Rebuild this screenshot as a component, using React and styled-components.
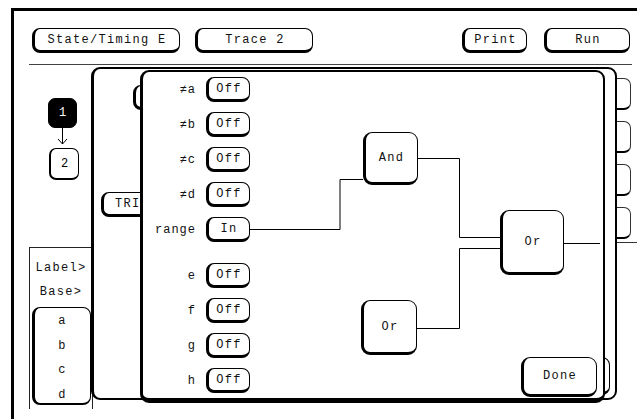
import React from "react";
import styled, { createGlobalStyle } from "styled-components";

const GlobalStyle = createGlobalStyle`
  html, body { margin: 0; padding: 0; background: #fff; }
  * { box-sizing: border-box; }
`;

const Screen = styled.div`
  width: 637px;
  height: 419px;
  overflow: hidden;
  background: #fff;
  padding: 8px 0 0 11px;
  font-family: "Liberation Mono", "DejaVu Sans Mono", monospace;
  font-size: 12px;
  letter-spacing: 1.3px;
  color: #111;
`;

const Frame = styled.div`
  border-left: 3px solid #000;
  border-top: 3px solid #000;
  height: 100%;
  display: flex;
  flex-direction: column;
`;

const Header = styled.div`
  display: flex;
  align-items: center;
  padding: 17px 7px 0 18px;
  gap: 15px;
`;

const Spacer = styled.div`
  flex: 1;
`;

const Key = styled.div`
  width: ${(p) => p.$w}px;
  height: ${(p) => p.$h || 25}px;
  margin-left: ${(p) => p.$ml || 0}px;
  margin-top: ${(p) => p.$mt || "0"};
  border: 1px solid #000;
  border-left-width: 3px;
  border-bottom-width: 3px;
  border-radius: 8px;
  display: flex;
  align-items: center;
  justify-content: center;
  background: #fff;
  white-space: nowrap;
  flex-shrink: 0;
  align-self: ${(p) => p.$self || "auto"};
`;

const Rule = styled.div`
  height: 1px;
  background: #444;
  margin: 11px 5px 0 15px;
`;

const Body = styled.div`
  flex: 1;
  display: flex;
`;

const LeftColumn = styled.div`
  width: 77px;
  flex-shrink: 0;
  display: flex;
  flex-direction: column;
  align-items: flex-start;
  padding: 33px 0 0 34px;
`;

const StepBox = styled.div`
  width: ${(p) => (p.$active ? 29 : 30)}px;
  height: ${(p) => (p.$active ? 30 : 32)}px;
  margin-left: ${(p) => (p.$active ? 0 : 1)}px;
  border-radius: 7px;
  display: flex;
  align-items: center;
  justify-content: center;
  letter-spacing: 0;
  background: ${(p) => (p.$active ? "#000" : "#fff")};
  color: ${(p) => (p.$active ? "#fff" : "#000")};
  border: 1px solid #000;
  border-left-width: ${(p) => (p.$active ? 1 : 2)}px;
  border-bottom-width: ${(p) => (p.$active ? 1 : 2)}px;
`;

const LabelPanel = styled.div`
  margin: 67px 0 0 -19px;
  width: 64px;
  height: 162px;
  border: 1px solid #222;
  border-bottom: none;
  padding: 8px 0 0 2px;
  display: flex;
  flex-direction: column;
  align-items: stretch;
`;

const PanelLine = styled.div`
  height: 24px;
  line-height: 24px;
  text-align: center;
  padding-right: 2px;
`;

const FieldBox = styled.div`
  margin-top: 3px;
  width: 59px;
  height: 98px;
  border: 1px solid #000;
  border-left-width: 3px;
  border-bottom-width: 2px;
  border-radius: 8px;
  padding-top: 1px;
`;

const FieldLine = styled.div`
  height: 24.5px;
  line-height: 24.5px;
  text-align: center;
`;

const Workspace = styled.div`
  position: relative;
  flex: 1;
  display: flex;
  align-items: flex-start;
`;

const BackPanel = styled.div`
  margin-top: 2px;
  width: 526px;
  height: 333px;
  flex-shrink: 0;
  border: 2px solid #000;
  border-left-width: 3px;
  border-radius: 9px;
  display: flex;
  flex-direction: column;
  align-items: flex-start;
  padding: 16px 5px 3px 7px;
`;

const Tabs = styled.div`
  display: flex;
  flex-direction: column;
  padding-top: 13px;
  gap: 11px;
  flex: 1;
`;

const Tab = styled.div`
  width: 14px;
  height: 32px;
  border: 1px solid #333;
  border-left: none;
  border-bottom: 2px solid #000;
  border-radius: 0 7px 7px 0;
`;

const TabWire = styled.div`
  height: 1px;
  background: #333;
  margin-top: -8px;
`;

const Dialog = styled.div`
  position: absolute;
  left: 49px;
  top: 5px;
  width: 465px;
  height: 333px;
  background: #fff;
  border: 2px solid #000;
  border-left-width: 3px;
  border-bottom-width: 5px;
  border-radius: 9px;
  padding: 5px 0 0 0;
`;

const Rows = styled.div`
  display: flex;
  flex-direction: column;
  gap: 10px;
  position: relative;
  z-index: 1;
`;

const Row = styled.div`
  display: flex;
  align-items: center;
  gap: 10px;
  margin-top: ${(p) => p.$extra || 0}px;
`;

const RowLabel = styled.div`
  width: 53px;
  text-align: right;
  letter-spacing: 1px;
`;

const Wires = styled.svg`
  position: absolute;
  left: 0;
  top: 0;
  width: 460px;
  height: 330px;
  pointer-events: none;
`;

const Node = styled.div`
  position: absolute;
  left: ${(p) => p.$x}px;
  top: ${(p) => p.$y}px;
  width: ${(p) => p.$w}px;
  height: ${(p) => p.$h}px;
  border: 1px solid #000;
  border-left-width: 3px;
  border-bottom-width: 3px;
  border-radius: 9px;
  background: #fff;
  display: flex;
  align-items: center;
  justify-content: center;
  z-index: 1;
`;

const stepArrow = (
  <svg width="30" height="20" viewBox="0 0 30 20" style={{ display: "block" }}>
    <line x1="14.5" y1="0" x2="14.5" y2="16" stroke="#000" strokeWidth="1" />
    <polyline points="10,11 14.5,16 19,11" fill="none" stroke="#000" strokeWidth="1" />
  </svg>
);

const topRows = [
  ["≠a", "Off"],
  ["≠b", "Off"],
  ["≠c", "Off"],
  ["≠d", "Off"],
  ["range", "In"],
];
const bottomRows = [
  ["e", "Off"],
  ["f", "Off"],
  ["g", "Off"],
  ["h", "Off"],
];

export default function App() {
  return (
    <>
      <GlobalStyle />
      <Screen>
        <Frame>
          <Header>
            <Key $w={148}>State/Timing E</Key>
            <Key $w={118}>Trace 2</Key>
            <Spacer />
            <Key $w={65}>Print</Key>
            <Key $w={86} $ml={2}>Run</Key>
          </Header>
          <Rule />
          <Body>
            <LeftColumn>
              <StepBox $active>1</StepBox>
              {stepArrow}
              <StepBox>2</StepBox>
              <LabelPanel>
                <PanelLine>Label&gt;</PanelLine>
                <PanelLine>Base&gt;</PanelLine>
                <FieldBox>
                  {["a", "b", "c", "d"].map((l) => (
                    <FieldLine key={l}>{l}</FieldLine>
                  ))}
                </FieldBox>
              </LabelPanel>
            </LeftColumn>
            <Workspace>
              <BackPanel>
                <Key $w={50} $ml={32} />
                <Key $w={60} $mt="82px">TRIG</Key>
                <Key $w={70} $h={38} $mt="auto" $self="flex-end" />
              </BackPanel>
              <Tabs>
                <Tab />
                <Tab />
                <Tab />
                <Tab />
                <TabWire />
              </Tabs>
              <Dialog>
                <Wires viewBox="0 0 460 330">
                  <polyline points="107,157.5 197,157.5 197,107.5 220,107.5" fill="none" stroke="#000" strokeWidth="1" />
                  <polyline points="275,86.5 316.5,86.5 316.5,165.5 357,165.5" fill="none" stroke="#000" strokeWidth="1" />
                  <polyline points="274,256.5 316.5,256.5 316.5,176.5 357,176.5" fill="none" stroke="#000" strokeWidth="1" />
                  <line x1="421" y1="171.5" x2="457" y2="171.5" stroke="#000" strokeWidth="1" />
                </Wires>
                <Rows>
                  {topRows.map(([l, v]) => (
                    <Row key={l}>
                      <RowLabel>{l}</RowLabel>
                      <Key $w={44}>{v}</Key>
                    </Row>
                  ))}
                  {bottomRows.map(([l, v], i) => (
                    <Row key={l} $extra={i === 0 ? 11 : 0}>
                      <RowLabel>{l}</RowLabel>
                      <Key $w={44}>{v}</Key>
                    </Row>
                  ))}
                </Rows>
                <Node $x={220} $y={60} $w={55} $h={53}>And</Node>
                <Node $x={357} $y={138} $w={64} $h={65}>Or</Node>
                <Node $x={218} $y={228} $w={56} $h={55}>Or</Node>
                <Node $x={378} $y={285} $w={76} $h={40}>Done</Node>
              </Dialog>
            </Workspace>
          </Body>
        </Frame>
      </Screen>
    </>
  );
}
